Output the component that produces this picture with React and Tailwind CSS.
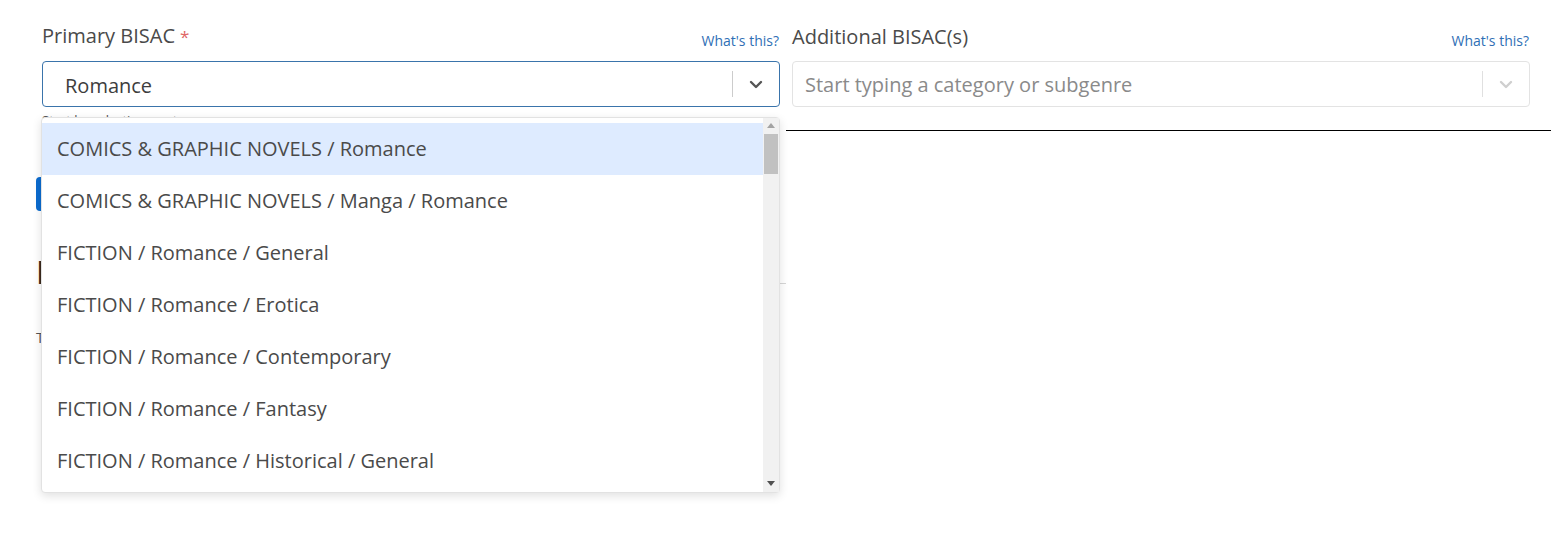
import React from "react";

const options = [
    "COMICS & GRAPHIC NOVELS / Romance",
    "COMICS & GRAPHIC NOVELS / Manga / Romance",
    "FICTION / Romance / General",
    "FICTION / Romance / Erotica",
    "FICTION / Romance / Contemporary",
    "FICTION / Romance / Fantasy",
    "FICTION / Romance / Historical / General",
];

function Chevron({ className }) {
    return (
        <svg width="14" height="9" viewBox="0 0 14 9" className={className}>
            <path d="M2 2 L7 7 L12 2" fill="none" stroke="currentColor" strokeWidth="2.4" strokeLinecap="round" strokeLinejoin="round" />
        </svg>
    );
}

function FieldLabel({ children, required }) {
    return (
        <div className="flex items-end justify-between mb-[10px] h-[28px]">
            <span className="text-[20px] leading-[28px] pt-[1px] text-[#4a4a4a]">
                {children}
                {required && <span className="text-[#e06666] text-[17px] ml-[5px]">*</span>}
            </span>
            <a className="text-[14px] leading-[20px] text-[#2f6fb5] mr-[1px]">What's this?</a>
        </div>
    );
}

export default function App() {
    return (
        <div className="relative h-[549px] bg-white overflow-hidden" style={{ fontFamily: '"Open Sans", sans-serif' }}>
            <div className="grid grid-cols-2 gap-x-3 pl-[42px] pr-[21px] pt-[23px]">
                {/* Primary */}
                <div>
                    <FieldLabel required>Primary BISAC</FieldLabel>
                    <div className="flex items-center h-[46px] border border-[#3a74ab] rounded-[4px] bg-white">
                        <span className="flex-1 pl-[22px] pt-[3px] text-[20px] text-[#3d3d3d]">Romance</span>
                        <span className="w-px h-[26px] bg-[#cccccc]" />
                        <span className="w-[46px] flex justify-center text-[#555555]">
                            <Chevron />
                        </span>
                    </div>
                    <p className="mt-[4px] text-[13px] text-[#555] leading-[18px]">Start by selecting a category</p>
                    <button className="mt-[48px] ml-[-6px] w-[150px] h-[34px] rounded-[4px] bg-[#0b6bcf] text-white text-[15px]">
                        Save
                    </button>
                    <div className="ml-[-6px] mt-[44px] flex items-end">
                        <h2 className="text-[32px] leading-[34px] text-[#3a2a1e] font-semibold">Keywords</h2>
                        <div className="flex-1 border-t border-[#d6d6d6] mb-[5px] mr-[-6px]" />
                    </div>
                    <p className="ml-[-6px] mt-[37px] text-[15px] text-[#555]">Tell readers about your book</p>
                </div>

                {/* Additional */}
                <div>
                    <FieldLabel>Additional BISAC(s)</FieldLabel>
                    <div className="flex items-center h-[46px] border border-[#e3e3e3] rounded-[4px] bg-white">
                        <span className="flex-1 pl-[12px] pt-[2px] text-[20px] text-[#8a8a8a]">Start typing a category or subgenre</span>
                        <span className="w-px h-[26px] bg-[#e0e0e0]" />
                        <span className="w-[46px] flex justify-center text-[#cfcfcf]">
                            <Chevron />
                        </span>
                    </div>
                    <div className="mt-[23px] ml-[-6px] mr-[-21px] border-t border-black" />
                </div>
            </div>

            {/* Open menu */}
            <div className="absolute left-[41px] top-[117px] w-[739px] h-[376px] flex bg-white border border-[#e2e2e2] rounded-[4px] shadow-[0_3px_10px_rgba(0,0,0,0.12)]">
                <ul className="flex-1 py-[5px]">
                    {options.map((o, i) => (
                        <li
                            key={o}
                            className={
                                "h-[52px] flex items-center pl-[15px] text-[20px] text-[#4a4a4a] " +
                                (i === 0 ? "bg-[#deebff]" : "")
                            }
                        >
                            {o}
                        </li>
                    ))}
                </ul>
                <div className="w-[16px] bg-[#f1f1f1] flex flex-col items-center">
                    <svg width="8" height="5" viewBox="0 0 8 5" className="mt-[5px]">
                        <path d="M0 5 L4 0 L8 5 Z" fill="#a3a3a3" />
                    </svg>
                    <div className="mt-[6px] w-[14px] h-[40px] bg-[#c1c1c1]" />
                    <div className="flex-1" />
                    <svg width="8" height="5" viewBox="0 0 8 5" className="mb-[6px]">
                        <path d="M0 0 L8 0 L4 5 Z" fill="#505050" />
                    </svg>
                </div>
            </div>
        </div>
    );
}
